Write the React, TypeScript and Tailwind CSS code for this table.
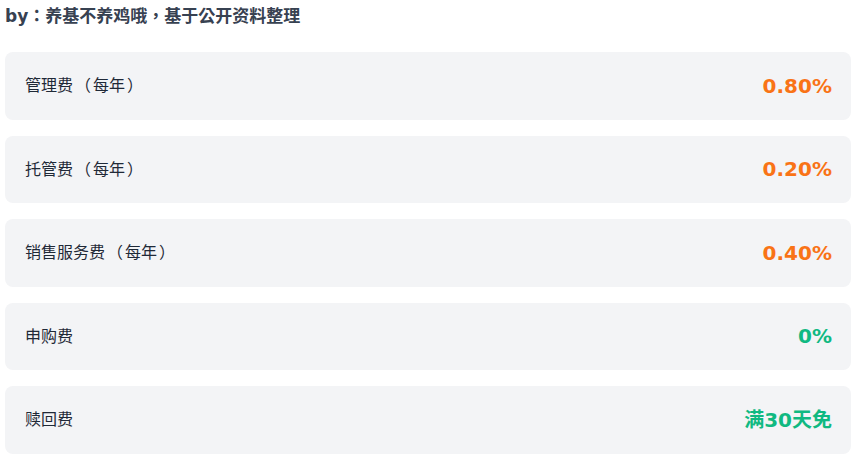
const rows = [
  { label: '管理费', note: '每年', value: '0.80%', tone: 'text-[#f97316]' },
  { label: '托管费', note: '每年', value: '0.20%', tone: 'text-[#f97316]' },
  { label: '销售服务费', note: '每年', value: '0.40%', tone: 'text-[#f97316]' },
  { label: '申购费', note: '', value: '0%', tone: 'text-[#10b981]' },
  { label: '赎回费', note: '', value: '满30天免', tone: 'text-[#10b981]' },
]

export default function App() {
  return (
    <div
      className="w-[855px] h-[458px] bg-white px-[5px] pt-[4px] overflow-hidden"
      style={{ fontFamily: '"DejaVu Sans", "Noto Sans CJK TC", sans-serif' }}
    >
      <div className="text-[17px] leading-[24px] font-bold text-[#374151]">
        by：养基不养鸡哦，基于公开资料整理
      </div>
      <div className="flex flex-col gap-4 mt-[24px] w-[846px]">
        {rows.map((r) => (
          <div
            key={r.label}
            className="h-[67.5px] bg-[#f3f4f6] rounded-lg flex items-center justify-between pl-5 pr-[19px]"
          >
            <span
              className="flex items-center text-[16px] leading-[24px] text-[#1f2937] -mt-[3px]"
              style={{ fontFamily: '"Noto Sans CJK TC", sans-serif' }}
            >
              <span>{r.label}</span>
              {r.note && (
                <>
                  <span className="w-5 text-left pl-[2px]">（</span>
                  <span>{r.note}</span>
                  <span className="w-5 text-right pr-[2px]">）</span>
                </>
              )}
            </span>
            <span className={'text-[20px] font-bold ' + r.tone}>{r.value}</span>
          </div>
        ))}
      </div>
    </div>
  )
}
